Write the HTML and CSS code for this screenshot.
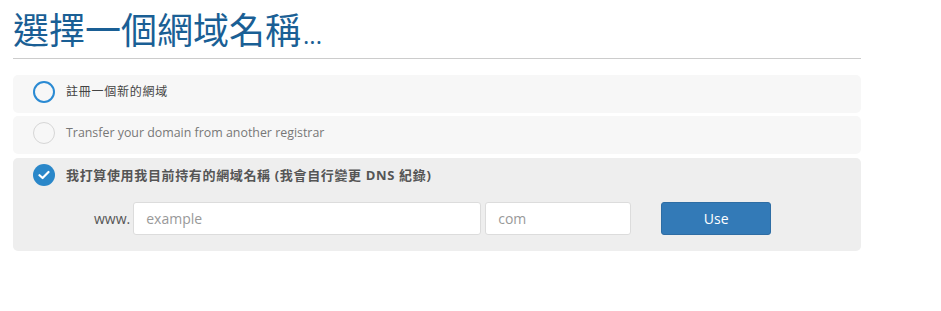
FILE: index.html
```html
<!DOCTYPE html>
<html lang="zh-TW">
<head>
    <meta charset="UTF-8">
    <title>選擇一個網域名稱</title>
    <link rel="stylesheet" href="styles.css">
</head>
<body>
    <div class="container">
        <h1 class="title">選擇一個網域名稱<span class="dots">...</span></h1>
        <div class="options">
            <div class="option">
                <span class="radio active"></span>
                <span class="option-label">註冊一個新的網域</span>
            </div>
            <div class="option">
                <span class="radio"></span>
                <span class="option-label muted">Transfer your domain from another registrar</span>
            </div>
            <div class="option selected">
                <div class="option-head">
                    <span class="radio checked">
                        <svg width="12" height="10" viewBox="0 0 12 10"><path d="M1.5 5.2 L4.6 8 L10.5 2" fill="none" stroke="#fff" stroke-width="2.2" stroke-linecap="round" stroke-linejoin="round"/></svg>
                    </span>
                    <span class="option-label bold">我打算使用我目前持有的網域名稱 (我會自行變更 DNS 紀錄)</span>
                </div>
                <div class="domain-row">
                    <span class="prefix">www.</span>
                    <input type="text" class="field sld" placeholder="example">
                    <input type="text" class="field tld" placeholder="com">
                    <button type="button" class="use-btn">Use</button>
                </div>
            </div>
        </div>
    </div>
</body>
</html>
```

FILE: styles.css
```css
body {
    margin: 0;
    font-family: 'Open Sans', 'Noto Sans CJK TC', sans-serif;
    color: #444;
    background: #fff;
}
.container {
    width: 848px;
    padding: 0 13px;
}
.title {
    margin: 0;
    padding: 10px 0 6px;
    font-size: 36px;
    font-weight: normal;
    line-height: 42px;
    color: #1a5f95;
    border-bottom: 1px solid #cccccc;
    font-family: 'Open Sans', 'Noto Sans CJK TC', sans-serif;
}
.dots {
    font-size: 24px;
    line-height: 0;
    margin-left: 2px;
}
.options {
    margin-top: 16px;
    display: flex;
    flex-direction: column;
    gap: 3px;
}
.option {
    background: #f7f7f7;
    border-radius: 5px;
    height: 38px;
    padding: 0 20px;
    display: flex;
    align-items: center;
    box-sizing: border-box;
}
.option.selected {
    background: #eeeeee;
    height: auto;
    display: block;
    padding: 6px 20px 16px;
    margin-top: 1px;
}
.option-head {
    display: flex;
    align-items: center;
}
.radio {
    width: 22px;
    height: 22px;
    box-sizing: border-box;
    border-radius: 50%;
    border: 1px solid #d6d6d6;
    background: #f7f7f7;
    margin-right: 11px;
    margin-top: -4px;
    flex-shrink: 0;
    display: flex;
    align-items: center;
    justify-content: center;
}
.radio.active {
    border: 2px solid #2a8ad3;
}
.radio.checked {
    border: none;
    background: #2a87c9;
    margin-top: 0;
}
.option-label {
    font-size: 12px;
    letter-spacing: 0.75px;
    color: #444;
    margin-top: -6px;
}
.option-label.muted {
    color: #777;
    font-size: 12.4px;
    letter-spacing: 0;
}
.option-label.bold {
    font-size: 13px;
    letter-spacing: 0.65px;
    font-weight: bold;
    color: #555;
    margin-top: -2px;
}
.domain-row {
    display: flex;
    align-items: center;
    margin-top: 16px;
    padding-left: 61px;
}
.prefix {
    font-size: 14px;
    color: #555;
    margin-right: 3px;
}
.field {
    height: 33px;
    box-sizing: border-box;
    border: 1px solid #dcdcdc;
    border-radius: 3px;
    background: #fff;
    padding: 0 12px;
    font-family: 'Open Sans', sans-serif;
    font-size: 14px;
    color: #555;
    outline: none;
}
.field::placeholder {
    color: #999;
}
.sld {
    width: 348px;
    margin-right: 4px;
}
.tld {
    width: 146px;
    margin-right: 30px;
}
.use-btn {
    width: 110px;
    height: 33px;
    margin-top: -1px;
    background: #337ab7;
    color: #fff;
    border: 1px solid #2e6da4;
    border-radius: 3px;
    font-family: 'Open Sans', sans-serif;
    font-size: 14px;
    cursor: pointer;
}
```
